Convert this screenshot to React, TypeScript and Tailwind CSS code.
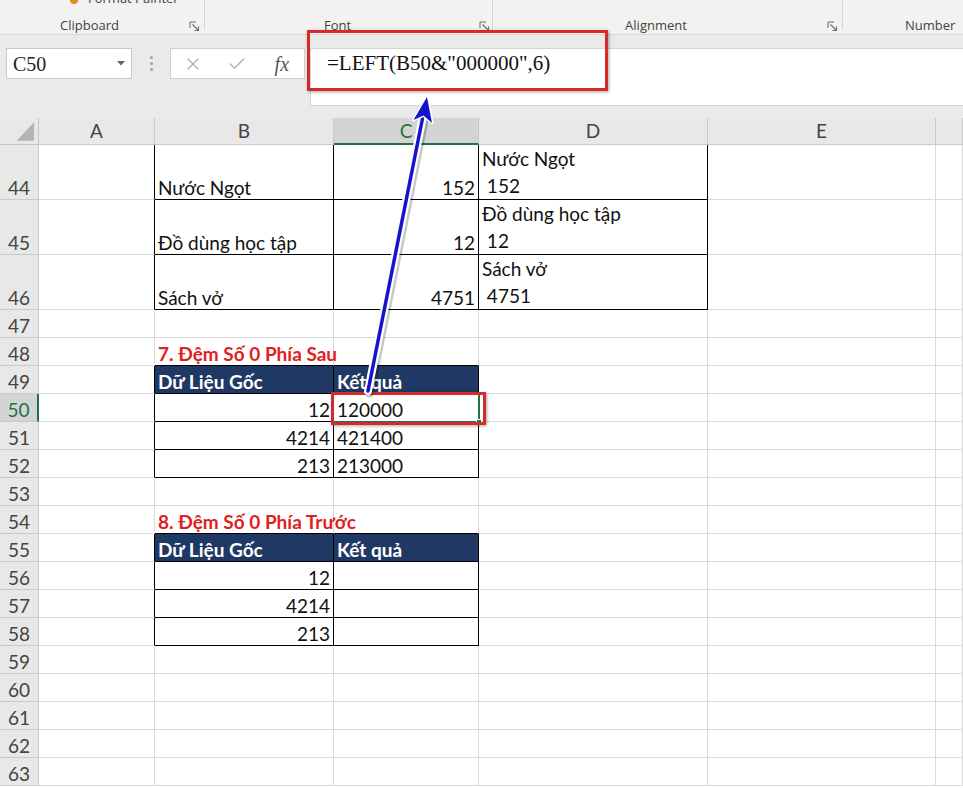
import React from "react";
import { X, Check } from "lucide-react";

type C = { t?: string; right?: boolean; title?: boolean; head?: boolean; lines?: [string, string] };

const data: Record<number, Record<number, C>> = {
  44: { 1: { t: "Nước Ngọt" }, 2: { t: "152", right: true }, 3: { lines: ["Nước Ngọt", " 152"] } },
  45: { 1: { t: "Đồ dùng học tập" }, 2: { t: "12", right: true }, 3: { lines: ["Đồ dùng học tập", " 12"] } },
  46: { 1: { t: "Sách vở" }, 2: { t: "4751", right: true }, 3: { lines: ["Sách vở", " 4751"] } },
  48: { 1: { t: "7. Đệm Số 0 Phía Sau", title: true } },
  49: { 1: { t: "Dữ Liệu Gốc", head: true }, 2: { t: "Kết quả", head: true } },
  50: { 1: { t: "12", right: true }, 2: { t: "120000" } },
  51: { 1: { t: "4214", right: true }, 2: { t: "421400" } },
  52: { 1: { t: "213", right: true }, 2: { t: "213000" } },
  54: { 1: { t: "8. Đệm Số 0 Phía Trước", title: true } },
  55: { 1: { t: "Dữ Liệu Gốc", head: true }, 2: { t: "Kết quả", head: true } },
  56: { 1: { t: "12", right: true } },
  57: { 1: { t: "4214", right: true } },
  58: { 1: { t: "213", right: true } },
};

const inTable = (r: number, c: number) =>
  (r >= 44 && r <= 46 && c >= 1 && c <= 3) ||
  (r >= 49 && r <= 52 && c >= 1 && c <= 2) ||
  (r >= 55 && r <= 58 && c >= 1 && c <= 2);

const rows = Array.from({ length: 20 }, (_, i) => 44 + i);
const cols = ["A", "B", "C", "D", "E", ""];

function Launcher() {
  return (
    <svg width="11" height="11" viewBox="0 0 11 11" className="shrink-0">
      <path d="M1 7 V1 H7" stroke="#6b6b6b" strokeWidth="1" fill="none" />
      <path d="M3.5 3.5 L9.5 9.5" stroke="#6b6b6b" strokeWidth="1.1" fill="none" />
      <path d="M9.5 5.5 V9.5 H5.5" stroke="#6b6b6b" strokeWidth="1.1" fill="none" />
    </svg>
  );
}

function Sep() {
  return <div className="w-px h-[30px] bg-[#d4d4d4] shrink-0" />;
}

function Cell({ r, c }: { r: number; c: number }) {
  const d = data[r]?.[c];
  const rb = inTable(r, c) || inTable(r, c + 1) ? "border-r-black" : "border-r-[#dadada]";
  const bb = inTable(r, c) || inTable(r + 1, c) ? "border-b-black" : "border-b-[#dadada]";
  const bg = d?.head ? "bg-[#1f3864]" : "";
  let inner: React.ReactNode = null;
  if (d?.lines) {
    inner = (
      <div className="flex flex-col leading-[27px] pl-[3px] whitespace-pre text-[#111]">
        <span>{d.lines[0]}</span>
        <span>{d.lines[1]}</span>
      </div>
    );
  } else if (d?.t) {
    const cls = d.title
      ? "font-bold text-[#e0201c] whitespace-nowrap pl-[3px]"
      : d.head
      ? "font-bold text-white whitespace-nowrap pl-[3px]"
      : d.right
      ? "text-[#111] w-full text-right pr-[3px]"
      : "text-[#111] whitespace-nowrap pl-[3px]";
    inner = <span className={`leading-[22px] ${cls}`}>{d.t}</span>;
  }
  return (
    <div className={`border-r border-b ${rb} ${bb} ${bg} flex items-end min-w-0 overflow-visible`}>
      {inner}
    </div>
  );
}

export default function App() {
  return (
    <div className="relative w-[963px] h-[788px] overflow-hidden bg-white font-['Lato','Noto_Sans',sans-serif]">
      {/* Ribbon */}
      <div className="h-[35px] bg-[#f3f2f1] border-b border-[#d8d8d8] flex overflow-hidden font-['Open_Sans','Noto_Sans',sans-serif] text-[13px] text-[#444]">
        <div className="w-[204px] flex flex-col shrink-0">
          <div className="-mt-[10px] h-[16px] flex items-center pl-[70px] gap-[10px] leading-[16px]">
            <span className="w-[8px] h-[12px] rounded-b-sm bg-[#e58a1f]" />
            <span>Format Painter</span>
          </div>
          <div className="flex-1 flex items-end pb-[1px]">
            <span className="flex-1 text-center leading-[16px] pr-[10px]">Clipboard</span>
            <span className="mr-[4px] mb-[1px]">
              <Launcher />
            </span>
          </div>
        </div>
        <Sep />
        <div className="w-[287px] flex items-end pb-[1px] shrink-0">
          <span className="flex-1 text-center leading-[16px] pr-[9px]">Font</span>
          <span className="mr-[2px] mb-[1px]">
            <Launcher />
          </span>
        </div>
        <Sep />
        <div className="w-[349px] flex items-end pb-[1px] shrink-0">
          <span className="flex-1 text-center leading-[16px] pr-[8px]">Alignment</span>
          <span className="mr-[4px] mb-[1px]">
            <Launcher />
          </span>
        </div>
        <Sep />
        <div className="flex-1 flex items-end pb-[1px] pl-[62px]">
          <span className="leading-[16px]">Number</span>
        </div>
      </div>

      {/* Formula bar */}
      <div className="h-[83px] bg-[#eaeaea] flex items-start pt-[13px] pl-[6px]">
        <div className="w-[126px] h-[31px] bg-white border border-[#c8c8c8] flex items-center pl-[6px] pr-[6px] font-['Liberation_Serif',serif] text-[20px] leading-[24px] text-[#222]">
          <span className="flex-1">C50</span>
          <svg width="8" height="5" viewBox="0 0 8 5">
            <path d="M0 0 H8 L4 4.5 Z" fill="#666" />
          </svg>
        </div>
        <div className="w-[38px] h-[31px] flex flex-col items-center justify-center gap-[3px]">
          <span className="w-[3px] h-[3px] rounded-full bg-[#a0a0a0]" />
          <span className="w-[3px] h-[3px] rounded-full bg-[#a0a0a0]" />
          <span className="w-[3px] h-[3px] rounded-full bg-[#a0a0a0]" />
        </div>
        <div className="w-[135px] h-[31px] bg-white border border-[#d0d0d0] flex items-center">
          <span className="w-[45px] flex justify-center">
            <X size={20} strokeWidth={1.4} color="#a8a8a8" />
          </span>
          <span className="w-[45px] flex justify-center">
            <Check size={20} strokeWidth={1.6} color="#b0b0b0" />
          </span>
          <span className="w-[45px] flex justify-center font-['Liberation_Serif',serif] italic text-[20px] text-[#555] leading-[24px]">
            fx
          </span>
        </div>
        <div className="ml-[5px] flex-1 h-[58px] bg-white border border-r-0 border-[#d4d4d4] pl-[16px] pt-[2px] font-['Liberation_Serif',serif] text-[21px] leading-[24px] text-[#111]">
          =LEFT(B50&amp;"000000",6)
        </div>
      </div>

      {/* Sheet grid */}
      <div className="grid grid-cols-[39px_116px_179px_145px_229px_228px_27px] grid-rows-[27px_55px_55px_55px_repeat(17,28px)] text-[19px]">
        <div className="bg-[#e8e8e8] border-r border-b border-[#c4c4c4] flex items-end justify-end">
          <svg width="39" height="27" viewBox="0 0 39 27">
            <path d="M17 24 H35 V5 Z" fill="#b4b4b4" />
          </svg>
        </div>
        {cols.map((l, i) =>
          i === 2 ? (
            <div
              key={i}
              className="bg-[#d4d4d4] border-r border-[#c4c4c4] border-b-2 border-b-[#217346] flex items-center justify-center text-[#217346] leading-[22px]"
            >
              {l}
            </div>
          ) : (
            <div
              key={i}
              className="bg-[#e8e8e8] border-r border-b border-[#c9c9c9] flex items-center justify-center text-[#444] leading-[22px]"
            >
              {l}
            </div>
          )
        )}
        {rows.map((r) => (
          <React.Fragment key={r}>
            {r === 50 ? (
              <div className="bg-[#d4d4d4] border-b border-b-[#c9c9c9] border-r-2 border-r-[#217346] flex items-end justify-center text-[#217346] leading-[22px]">
                {r}
              </div>
            ) : (
              <div className="bg-[#e8e8e8] border-r border-b border-[#c9c9c9] flex items-end justify-center text-[#444] leading-[22px]">
                {r}
              </div>
            )}
            {cols.map((_, c) => (
              <Cell key={c} r={r} c={c} />
            ))}
          </React.Fragment>
        ))}
      </div>

      {/* Active cell selection C50 */}
      <div className="absolute left-[332px] top-[392px] w-[148px] h-[31px] border-2 border-[#217346]">
        <span className="absolute right-[-4px] bottom-[-4px] w-[6px] h-[6px] bg-[#217346] border border-white" />
      </div>

      {/* Red highlight boxes */}
      <div className="absolute left-[307px] top-[30px] w-[301px] h-[61px] border-[3px] border-[#d42a2a] shadow-[1px_1px_3px_rgba(0,0,0,0.35)]" />
      <div className="absolute left-[331px] top-[392px] w-[155px] h-[33px] border-[3px] border-[#d42a2a] shadow-[1px_1px_3px_rgba(0,0,0,0.35)]" />

      {/* Arrow */}
      <svg className="absolute left-0 top-0 pointer-events-none" width="963" height="788" viewBox="0 0 963 788">
        <line x1="369.5" y1="393" x2="424.5" y2="118" stroke="rgba(0,0,0,0.22)" strokeWidth="9" strokeLinecap="round" />
        <line x1="368" y1="391" x2="423" y2="116" stroke="#ffffff" strokeWidth="8" strokeLinecap="round" />
        <line x1="368" y1="391" x2="423" y2="116" stroke="#1414cc" strokeWidth="3.5" strokeLinecap="round" />
        <polygon
          points="427,97 432,123 423.5,115.5 413.5,120"
          fill="#1414cc"
          stroke="#ffffff"
          strokeWidth="3"
          strokeLinejoin="round"
          style={{ paintOrder: "stroke" }}
        />
      </svg>
    </div>
  );
}
